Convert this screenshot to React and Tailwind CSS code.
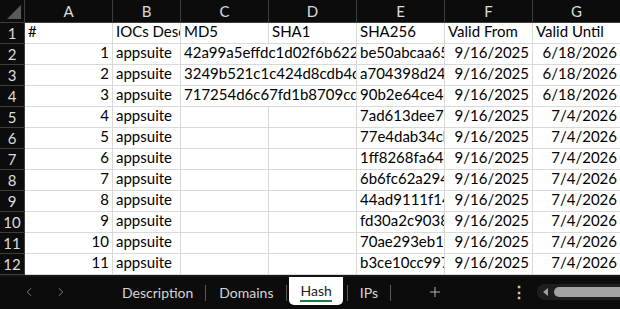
import { ChevronLeft, ChevronRight, Plus } from 'lucide-react';

const md5 = [
  '42a99a5effdc1d02f6b6225e1c3a9f04',
  '3249b521c1c424d8cdb4ce7a90b1e5d2',
  '717254d6c67fd1b8709cdb3f2e8a41c6',
];

const sha256 = [
  'be50abcaa65c1e2f',
  'a704398d244b9c1e',
  '90b2e64ce4c7d1a3',
  '7ad613dee75f02b1',
  '77e4dab34cb9a0e2',
  '1ff8268fa64c3d7b',
  '6b6fc62a2941e8d0',
  '44ad9111f14c6b2a',
  'fd30a2c9038e5f17',
  '70ae293eb1c4d9a8',
  'b3ce10cc997a2e61',
];

const rows = sha256.map((hash, i) => ({
  n: i + 1,
  md5: md5[i],
  sha256: hash,
  from: '9/16/2025',
  until: i < 3 ? '6/18/2026' : '7/4/2026',
}));

const cell = 'h-[21px] border-r border-b border-[#d9d9d9] overflow-hidden whitespace-nowrap flex items-end px-[3px] pb-px';

function RowHead({ n }) {
  return (
    <div className="h-[21px] bg-[#0c0c0c] border-r border-b border-[#3d3d3d] flex items-center justify-center text-[#dcdcdc]">
      {n}
    </div>
  );
}

export default function App() {
  return (
    <div className="w-[620px] h-[309px] overflow-hidden bg-white text-[15px] text-black" style={{ fontFamily: 'Lato, "Noto Sans", sans-serif' }}>
      <div className="grid grid-cols-[25px_88px_68px_88px_88px_88px_88px_88px] w-[634px]">
        {/* column headers */}
        <div className="h-[23px] bg-[#0c0c0c] border-r border-b border-[#3d3d3d] flex items-end justify-end p-[3px]">
          <svg width="14" height="14" viewBox="0 0 14 14">
            <polygon points="14,0 14,14 0,14" fill="#5a5a5a" />
          </svg>
        </div>
        {['A', 'B', 'C', 'D', 'E', 'F', 'G'].map((c) => (
          <div key={c} className="h-[23px] bg-[#0c0c0c] border-r border-b border-[#3d3d3d] flex items-center justify-center text-[#dcdcdc]">
            {c}
          </div>
        ))}

        {/* header row */}
        <RowHead n={1} />
        <div className={cell}>#</div>
        <div className={cell}>IOCs Description</div>
        <div className={cell}>MD5</div>
        <div className={cell}>SHA1</div>
        <div className={cell}>SHA256</div>
        <div className={cell}>Valid From</div>
        <div className={cell}>Valid Until</div>

        {rows.map((r) => (
          <div key={r.n} className="contents">
            <RowHead n={r.n + 1} />
            <div className={`${cell} justify-end`}>{r.n}</div>
            <div className={cell}>appsuite</div>
            {r.md5 ? (
              <div className={`${cell} col-span-2`}>{r.md5}</div>
            ) : (
              <>
                <div className={cell} />
                <div className={cell} />
              </>
            )}
            <div className={cell}>{r.sha256}</div>
            <div className={`${cell} justify-end`}>{r.from}</div>
            <div className={`${cell} justify-end`}>{r.until}</div>
          </div>
        ))}
      </div>

      {/* sheet tabs */}
      <div className="h-[34px] bg-[#0c0c0c] border-t-2 border-[#141414] flex items-start text-[14px] text-[#d6d6d6]">
        <div className="flex items-center h-[30px] pl-[22px] gap-[18px] text-[#8a8a8a]">
          <ChevronLeft size={14} strokeWidth={1.5} />
          <ChevronRight size={14} strokeWidth={1.5} />
        </div>
        <div className="flex items-start h-full ml-[42px]">
          <div className="h-[30px] flex items-center px-[12px]">Description</div>
          <div className="w-px h-[16px] bg-[#5a5a5a] mt-[8px]" />
          <div className="h-[30px] flex items-center px-[13px]">Domains</div>
          <div className="w-px h-[16px] bg-[#5a5a5a] mt-[8px]" />
          <div className="h-[28px] ml-[2px] bg-white rounded-b-[5px] flex flex-col items-center justify-center px-[11px] text-[#1a1a1a]">
            <span className="leading-[18px] mt-[2px]">Hash</span>
            <span className="h-[2px] w-full bg-[#1e7b45]" />
          </div>
          <div className="w-px h-[16px] bg-[#5a5a5a] mt-[8px] ml-[4px]" />
          <div className="h-[30px] flex items-center px-[12px]">IPs</div>
          <div className="w-px h-[16px] bg-[#5a5a5a] mt-[8px]" />
          <div className="h-[30px] flex items-center ml-[36px] text-[#c8c8c8]">
            <Plus size={16} strokeWidth={1.3} />
          </div>
          <div className="h-[30px] flex items-center ml-[68px] text-[#c8c8c8] text-[16px] font-bold">⋮</div>
          <div className="h-[16px] mt-[7px] ml-[10px] w-[100px] bg-[#1e1e1e] rounded-l-full flex items-center pl-[6px] gap-[6px]">
            <svg width="5" height="8" viewBox="0 0 5 8">
              <polygon points="5,0 5,8 0,4" fill="#a0a0a0" />
            </svg>
            <div className="h-[10px] flex-1 bg-[#a3a3a3] rounded-l-full" />
          </div>
        </div>
      </div>
    </div>
  );
}
